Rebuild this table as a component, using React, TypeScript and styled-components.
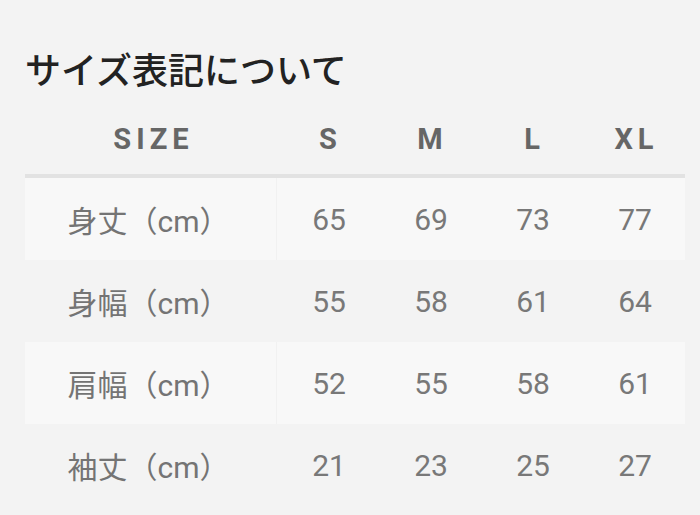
import React from "react";
import styled, { createGlobalStyle } from "styled-components";

const Global = createGlobalStyle`
  html, body {
    margin: 0;
    padding: 0;
    background: #f3f3f3;
  }
  body {
    font-family: Roboto, "Noto Sans CJK JP", sans-serif;
  }
`;

const Page = styled.div`
  padding: 46px 15px 0 25px;
  width: 660px;
`;

const Title = styled.h2`
  margin: 0 0 14px;
  font-family: "Noto Sans CJK JP", sans-serif;
  font-size: 36px;
  line-height: 44px;
  font-weight: 500;
  color: #222;
`;

const Row = styled.div<{ $shade?: "head" | "light" | "plain" }>`
  display: grid;
  grid-template-columns: 252px repeat(4, 1fr);
  height: ${(p) => (p.$shade === "head" ? "70px" : "82px")};
  align-items: center;
  background: ${(p) => (p.$shade === "light" ? "#f8f8f8" : "transparent")};
  border-bottom: ${(p) => (p.$shade === "head" ? "4px solid #e2e2e2" : "none")};
`;

const HeadCell = styled.div`
  text-align: center;
  font-family: Roboto, sans-serif;
  font-weight: 700;
  font-size: 29px;
  letter-spacing: 5px;
  color: #666;
  padding-left: 5px;
`;

const LabelCell = styled.div<{ $divider?: boolean }>`
  height: 100%;
  display: flex;
  align-items: center;
  justify-content: center;
  padding-right: 4px;
  font-family: Roboto, "Noto Sans CJK JP", sans-serif;
  font-size: 30px;
  color: #747474;
  border-right: 1px solid ${(p) => (p.$divider ? "#f1f1f1" : "transparent")};
`;

const ValueCell = styled.div`
  text-align: center;
  font-family: Roboto, sans-serif;
  font-size: 30px;
  color: #787878;
  padding-left: 2px;
`;

const sizes = ["S", "M", "L", "XL"];
const rows: { label: string; values: number[] }[] = [
  { label: "身丈（cm）", values: [65, 69, 73, 77] },
  { label: "身幅（cm）", values: [55, 58, 61, 64] },
  { label: "肩幅（cm）", values: [52, 55, 58, 61] },
  { label: "袖丈（cm）", values: [21, 23, 25, 27] },
];

export default function App() {
  return (
    <>
      <Global />
      <Page>
        <Title>サイズ表記について</Title>
        <Row $shade="head">
          <HeadCell>SIZE</HeadCell>
          {sizes.map((s) => (
            <HeadCell key={s}>{s}</HeadCell>
          ))}
        </Row>
        {rows.map((r, i) => (
          <Row key={r.label} $shade={i % 2 === 0 ? "light" : "plain"}>
            <LabelCell $divider={i % 2 === 0}>{r.label}</LabelCell>
            {r.values.map((v, j) => (
              <ValueCell key={j}>{v}</ValueCell>
            ))}
          </Row>
        ))}
      </Page>
    </>
  );
}
